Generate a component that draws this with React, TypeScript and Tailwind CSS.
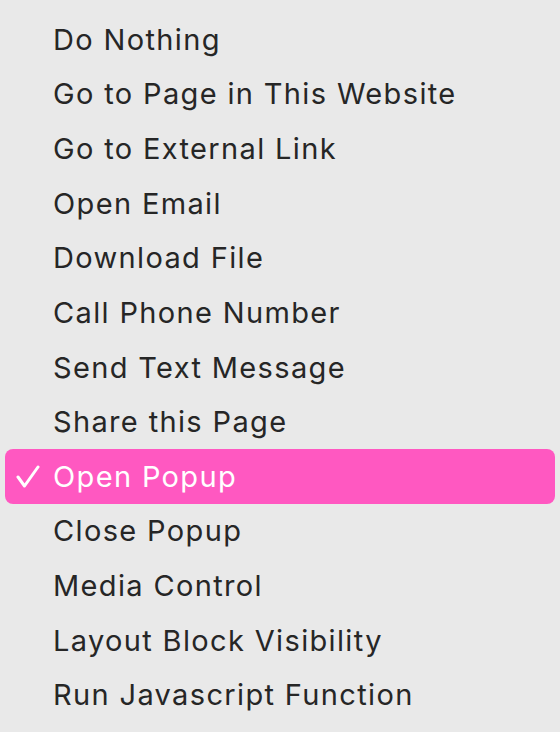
const items = [
  "Do Nothing",
  "Go to Page in This Website",
  "Go to External Link",
  "Open Email",
  "Download File",
  "Call Phone Number",
  "Send Text Message",
  "Share this Page",
  "Open Popup",
  "Close Popup",
  "Media Control",
  "Layout Block Visibility",
  "Run Javascript Function",
];

const selected = "Open Popup";

export default function App() {
  return (
    <div className="w-[560px] h-[732px] bg-[#e9e9e9] pt-[12px] px-[5px] font-['Inter','Liberation_Sans',sans-serif]">
      <ul className="flex flex-col">
        {items.map((item) => {
          const active = item === selected;
          return (
            <li
              key={item}
              className={
                active
                  ? "relative flex items-center h-[54.67px] pl-[48px] rounded-[8px] bg-[#ff58c1] text-white text-[29px] tracking-[1.35px]"
                  : "relative flex items-center h-[54.67px] pl-[48px] rounded-[8px] text-[#262626] text-[29px] tracking-[1.35px]"
              }
            >
              {active && (
                <svg
                  className="absolute left-[11px] top-1/2 -translate-y-1/2"
                  width="26"
                  height="24"
                  viewBox="0 0 26 24"
                  fill="none"
                  stroke="white"
                  strokeWidth="3"
                  strokeLinecap="round"
                  strokeLinejoin="round"
                >
                  <path d="M2 12 L8.5 21 L22 2" />
                </svg>
              )}
              {item}
            </li>
          );
        })}
      </ul>
    </div>
  );
}
